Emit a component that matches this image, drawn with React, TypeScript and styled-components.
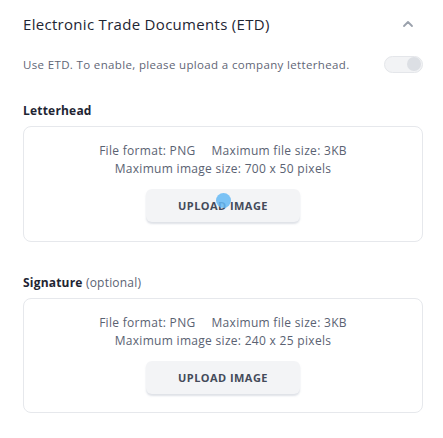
import React from "react";
import styled, { createGlobalStyle } from "styled-components";

const Global = createGlobalStyle`
  html, body { margin: 0; padding: 0; background: #ffffff; }
  body { font-family: "Open Sans", "Noto Sans", sans-serif; }
`;

const Page = styled.div`
  width: 443px;
  padding: 12px 20px 0 23px;
  box-sizing: border-box;
  display: flex;
  flex-direction: column;
`;

const HeaderRow = styled.div`
  display: flex;
  align-items: center;
  justify-content: space-between;
  height: 24px;
`;

const Title = styled.h1`
  margin: 0;
  font-size: 15px;
  font-weight: 400;
  color: #1e2533;
  letter-spacing: 0.3px;
`;

const Chevron = styled.svg`
  width: 14px;
  height: 14px;
  margin-right: 8px;
`;

const ToggleRow = styled.div`
  display: flex;
  align-items: center;
  justify-content: space-between;
  margin-top: 19px;
  height: 18px;
`;

const Subtitle = styled.p`
  margin: 0;
  font-size: 11.5px;
  letter-spacing: 0.35px;
  color: #5f6676;
`;

const Track = styled.div`
  width: 39px;
  height: 17px;
  box-sizing: border-box;
  border-radius: 9px;
  background: #f2f3f5;
  border: 1px solid #e4e6ea;
  display: flex;
  align-items: center;
  justify-content: flex-end;
  padding-right: 1px;
`;

const Thumb = styled.div`
  width: 14px;
  height: 14px;
  border-radius: 50%;
  background: #dcdfe4;
`;

const Section = styled.section<{ $top: number }>`
  margin-top: ${(p) => p.$top}px;
  display: flex;
  flex-direction: column;
`;

const Label = styled.div`
  font-size: 12px;
  letter-spacing: 0.2px;
  color: #1e2533;
  height: 16px;
  line-height: 16px;
`;

const Strong = styled.span`
  font-weight: 700;
`;

const Optional = styled.span`
  color: #5b6373;
`;

const Card = styled.div<{ $height: number }>`
  margin-top: 7px;
  width: 400px;
  height: ${(p) => p.$height}px;
  box-sizing: border-box;
  border: 1px solid #e6e8ec;
  border-radius: 8px;
  display: flex;
  flex-direction: column;
  align-items: center;
  padding-top: 15px;
`;

const Info = styled.div`
  font-size: 12px;
  letter-spacing: 0.3px;
  line-height: 18px;
  color: #5a6272;
  text-align: center;
`;

const Gap = styled.span`
  display: inline-block;
  width: 16px;
`;

const ButtonWrap = styled.div`
  position: relative;
  margin-top: 11px;
`;

const UploadButton = styled.button`
  width: 154px;
  height: 33px;
  border: none;
  border-radius: 6px;
  background: #f3f4f6;
  box-shadow: 0 2px 2px rgba(160, 170, 185, 0.35);
  font-family: "Open Sans", "Noto Sans", sans-serif;
  font-size: 11px;
  font-weight: 700;
  letter-spacing: 0.45px;
  color: #444b5a;
  text-transform: uppercase;
  cursor: default;
`;

const Ripple = styled.span`
  position: absolute;
  left: 70px;
  top: 4px;
  width: 15px;
  height: 15px;
  border-radius: 50%;
  background: rgba(100, 185, 245, 0.85);
  pointer-events: none;
`;

export default function App() {
  return (
    <>
      <Global />
      <Page>
        <HeaderRow>
          <Title>Electronic Trade Documents (ETD)</Title>
          <Chevron viewBox="0 0 14 14">
            <path d="M3 9 L7 5 L11 9" fill="none" stroke="#9aa1ac" strokeWidth="1.8" strokeLinecap="round" strokeLinejoin="round" />
          </Chevron>
        </HeaderRow>
        <ToggleRow>
          <Subtitle>Use ETD. To enable, please upload a company letterhead.</Subtitle>
          <Track>
            <Thumb />
          </Track>
        </ToggleRow>
        <Section $top={30}>
          <Label><Strong>Letterhead</Strong></Label>
          <Card $height={116}>
            <Info>
              File format: PNG<Gap />Maximum file size: 3KB
              <br />
              Maximum image size: 700 x 50 pixels
            </Info>
            <ButtonWrap>
              <UploadButton>Upload image</UploadButton>
              <Ripple />
            </ButtonWrap>
          </Card>
        </Section>
        <Section $top={33}>
          <Label><Strong>Signature</Strong> <Optional>(optional)</Optional></Label>
          <Card $height={115}>
            <Info>
              File format: PNG<Gap />Maximum file size: 3KB
              <br />
              Maximum image size: 240 x 25 pixels
            </Info>
            <ButtonWrap>
              <UploadButton>Upload image</UploadButton>
            </ButtonWrap>
          </Card>
        </Section>
      </Page>
    </>
  );
}
